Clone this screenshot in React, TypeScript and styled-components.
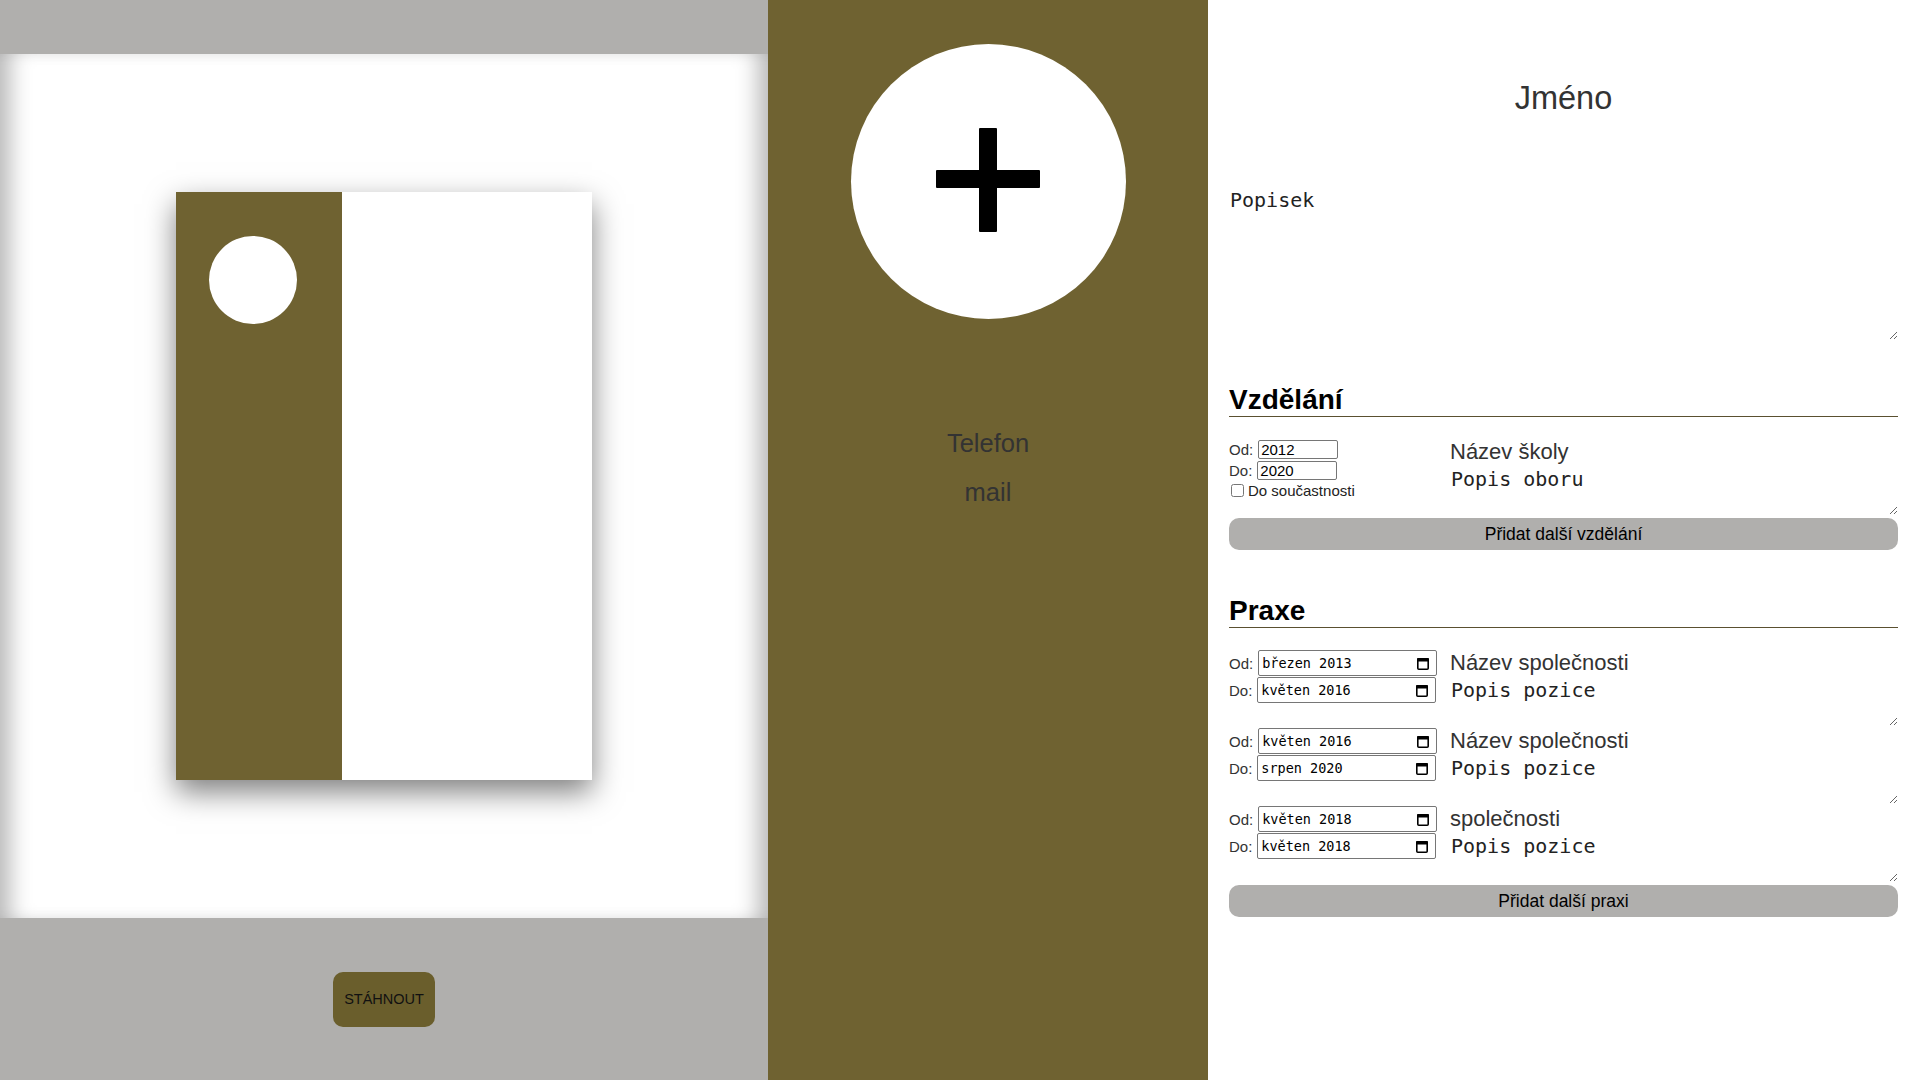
import React from 'react'
import styled, {createGlobalStyle} from 'styled-components'

const OLIVE = '#6f6231'
const GRAY = '#b0afad'
const MONO = '"DejaVu Sans Mono", "Liberation Mono", monospace'

const GlobalStyle = createGlobalStyle`
  * {
    box-sizing: border-box;
  }
  html, body {
    margin: 0;
    padding: 0;
    height: 100%;
  }
  body {
    font-family: "Liberation Sans", Arial, sans-serif;
    overflow: hidden;
  }
`

const Page = styled.div`
  display: grid;
  grid-template-columns: 768px 440px 1fr;
  height: 100vh;
`

/* ---------- preview ---------- */

const PreviewPanel = styled.section`
  display: flex;
  flex-direction: column;
  background-color: ${GRAY};
`

const TopBar = styled.div`
  height: 54px;
`

const PreviewArea = styled.div`
  height: 864px;
  background-color: #fff;
  display: flex;
  align-items: center;
  justify-content: center;
  box-shadow: inset 22px 0 22px -12px rgba(0, 0, 0, 0.28),
  inset -22px 0 22px -12px rgba(0, 0, 0, 0.28);
`

const Sheet = styled.div`
  width: 416px;
  height: 588px;
  display: flex;
  background-color: #fff;
  box-shadow: 0 12px 28px rgba(0, 0, 0, 0.5);
`

const SheetSide = styled.div`
  width: 166px;
  background-color: ${OLIVE};
  padding: 44px 0 0 33px;
`

const SheetPhoto = styled.div`
  width: 88px;
  height: 88px;
  border-radius: 50%;
  background-color: #fff;
`

const BottomBar = styled.div`
  flex: 1;
  display: flex;
  align-items: center;
  justify-content: center;
`

const DownloadButton = styled.button`
  height: 55px;
  padding: 0 11px;
  border: none;
  border-radius: 10px;
  background-color: #6a5e2c;
  color: #111;
  font-family: "Liberation Sans", Arial, sans-serif;
  font-size: 14.5px;
  cursor: pointer;
`

/* ---------- contact column ---------- */

const ContactPanel = styled.section`
  background-color: ${OLIVE};
  display: flex;
  flex-direction: column;
  align-items: center;
  padding-top: 44px;
`

const PhotoPicker = styled.div`
  width: 275px;
  height: 275px;
  border-radius: 50%;
  background-color: #fff;
  display: flex;
  align-items: center;
  justify-content: center;
  padding-bottom: 4px;
  cursor: pointer;
`

const ContactInput = styled.input<{ $gap: number }>`
  margin-top: ${p => p.$gap}px;
  width: 100%;
  height: 29px;
  border: none;
  background: transparent;
  text-align: center;
  color: #333;
  font-family: "Liberation Sans", Arial, sans-serif;
  font-size: 25.5px;
  outline: none;
`

/* ---------- form ---------- */

const FormPanel = styled.section`
  background-color: #fff;
  padding: 0 22px 0 21px;
  display: flex;
  flex-direction: column;
`

const NameInput = styled.input`
  margin-top: 80px;
  height: 37px;
  border: none;
  text-align: center;
  color: #333;
  font-family: "Liberation Sans", Arial, sans-serif;
  font-size: 32.5px;
  outline: none;
`

const MonoArea = styled.textarea<{ $height: number, $top?: number }>`
  display: block;
  width: 100%;
  height: ${p => p.$height}px;
  margin-top: ${p => p.$top || 0}px;
  padding: 2px 1px;
  border: none;
  color: #222;
  font-family: ${MONO};
  font-size: 20px;
  outline: none;
`

const SectionTitle = styled.h2<{ $top: number }>`
  margin: ${p => p.$top}px 0 22px;
  height: 33px;
  line-height: 32px;
  font-size: 28px;
  font-weight: bold;
  color: #000;
  border-bottom: 1px solid #5a5030;
`

const EntryRow = styled.div`
  display: grid;
  grid-template-columns: 221px 1fr;
  margin-bottom: 2px;
`

const DateColumn = styled.div`
  display: flex;
  flex-direction: column;
`

const DateLine = styled.label<{ $tall?: boolean }>`
  display: flex;
  align-items: center;
  gap: 5px;
  height: ${p => (p.$tall ? 26 : 20)}px;
  margin-bottom: 1px;
  font-size: 15px;
  color: #333;
`

const YearInput = styled.input`
  width: 80px;
  height: 19px;
  padding: 0 2px;
  border: 1px solid #767676;
  border-radius: 2px;
  font-family: "Liberation Sans", Arial, sans-serif;
  font-size: 15px;
  color: #000;
`

const CheckLine = styled.label`
  display: flex;
  align-items: center;
  margin-top: 1px;
  font-size: 15px;
  color: #222;

  & > input {
    width: 13px;
    height: 13px;
    margin: 0 4px 0 2px;
  }
`

const MonthBox = styled.div`
  width: 179px;
  height: 26px;
  display: flex;
  align-items: center;
  justify-content: space-between;
  padding: 0 7px 0 3px;
  border: 1px solid #767676;
  border-radius: 2px;
  font-family: ${MONO};
  font-size: 13.5px;
  color: #000;
`

const TextColumn = styled.div`
  display: flex;
  flex-direction: column;
`

const TitleInput = styled.input`
  height: 26px;
  padding: 0;
  border: none;
  color: #333;
  font-family: "Liberation Sans", Arial, sans-serif;
  font-size: 22px;
  outline: none;
`

const AddButton = styled.button`
  width: 100%;
  height: 32px;
  margin-top: 1px;
  border: none;
  border-radius: 10px;
  background-color: ${GRAY};
  color: #000;
  font-family: "Liberation Sans", Arial, sans-serif;
  font-size: 17.5px;
  cursor: pointer;
`

const PlusIcon = () => (
    <svg width="104" height="104" viewBox="0 0 104 104">
        <rect x="0" y="42" width="104" height="18" rx="1" fill="#000"/>
        <rect x="43" y="0" width="18" height="104" rx="1" fill="#000"/>
    </svg>
)

const CalendarIcon = () => (
    <svg width="12" height="13" viewBox="0 0 12 13">
        <rect x="0.8" y="1.8" width="10.4" height="10.4" rx="1" fill="none" stroke="#000" strokeWidth="1.6"/>
        <rect x="0" y="1" width="12" height="3.6" rx="1" fill="#000"/>
    </svg>
)

type JobType = {
    from: string
    to: string
    company: string
}

const jobs: JobType[] = [
    {from: 'březen 2013', to: 'květen 2016', company: 'Název společnosti'},
    {from: 'květen 2016', to: 'srpen 2020', company: 'Název společnosti'},
    {from: 'květen 2018', to: 'květen 2018', company: 'společnosti'},
]

const MonthField = (props: { label: string, value: string }) => (
    <DateLine $tall>
        {props.label}
        <MonthBox>
            <span>{props.value}</span>
            <CalendarIcon/>
        </MonthBox>
    </DateLine>
)

const App = () => {
    return (
        <Page>
            <GlobalStyle/>
            <PreviewPanel>
                <TopBar/>
                <PreviewArea>
                    <Sheet>
                        <SheetSide>
                            <SheetPhoto/>
                        </SheetSide>
                    </Sheet>
                </PreviewArea>
                <BottomBar>
                    <DownloadButton>STÁHNOUT</DownloadButton>
                </BottomBar>
            </PreviewPanel>

            <ContactPanel>
                <PhotoPicker>
                    <PlusIcon/>
                </PhotoPicker>
                <ContactInput $gap={110} defaultValue="Telefon"/>
                <ContactInput $gap={20} defaultValue="mail"/>
            </ContactPanel>

            <FormPanel>
                <NameInput defaultValue="Jméno"/>
                <MonoArea $height={154} $top={69} defaultValue="Popisek"/>

                <SectionTitle $top={44}>Vzdělání</SectionTitle>
                <EntryRow>
                    <DateColumn>
                        <DateLine>Od: <YearInput defaultValue="2012"/></DateLine>
                        <DateLine>Do: <YearInput defaultValue="2020"/></DateLine>
                        <CheckLine><input type="checkbox"/>Do součastnosti</CheckLine>
                    </DateColumn>
                    <TextColumn>
                        <TitleInput defaultValue="Název školy"/>
                        <MonoArea $height={50} defaultValue="Popis oboru"/>
                    </TextColumn>
                </EntryRow>
                <AddButton>Přidat další vzdělání</AddButton>

                <SectionTitle $top={45}>Praxe</SectionTitle>
                {jobs.map((job, i) => (
                    <EntryRow key={i}>
                        <DateColumn>
                            <MonthField label="Od:" value={job.from}/>
                            <MonthField label="Do:" value={job.to}/>
                        </DateColumn>
                        <TextColumn>
                            <TitleInput defaultValue={job.company}/>
                            <MonoArea $height={50} defaultValue="Popis pozice"/>
                        </TextColumn>
                    </EntryRow>
                ))}
                <AddButton>Přidat další praxi</AddButton>
            </FormPanel>
        </Page>
    )
}

export default App
